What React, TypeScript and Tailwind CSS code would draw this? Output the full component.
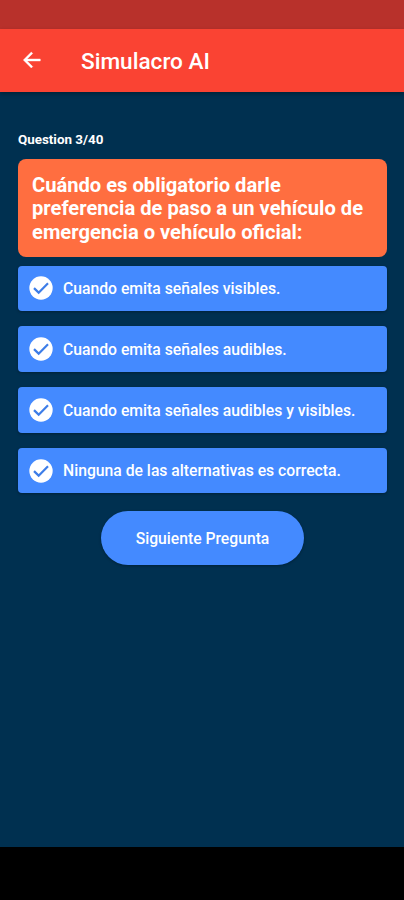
const answers = [
  'Cuando emita señales visibles.',
  'Cuando emita señales audibles.',
  'Cuando emita señales audibles y visibles.',
  'Ninguna de las alternativas es correcta.',
];

function Answer({ text }: { text: string }) {
  return (
    <button className="flex h-[45.4px] w-full items-center rounded-[4px] bg-[#448aff] pl-[9px] text-left text-white shadow-[0_1px_3px_rgba(0,0,0,0.3)]">
      <svg className="size-7 shrink-0" viewBox="0 0 24 24">
        <circle cx="12" cy="12" r="10" fill="currentColor" />
        <path d="M6 12.1 10 16 18 7.9" fill="none" stroke="#3d7de8" strokeWidth="1.9" />
      </svg>
      <span className="ml-2 pt-px text-[15.73px] font-medium whitespace-nowrap">{text}</span>
    </button>
  );
}

export default function App() {
  return (
    <div className="flex h-[900px] w-[404px] flex-col overflow-hidden bg-[#003050] font-['Roboto',sans-serif] text-white">
      <div className="h-[28.5px] shrink-0 bg-[#b8312b]" />
      <header className="flex h-[63px] shrink-0 items-center bg-[#fa4333] pl-5 shadow-[0_2px_4px_rgba(0,0,0,0.3)]">
        <svg className="size-6" viewBox="0 0 24 24" fill="currentColor" stroke="currentColor" strokeWidth="0.4">
          <path d="M21 11H7.83l5.59-5.59L12 4l-8 8 8 8 1.41-1.41L7.83 13H21v-2z" transform="translate(-.7 0)" />
        </svg>
        <h1 className="ml-[37px] pt-[3px] text-[22.6px] font-medium">Simulacro AI</h1>
      </header>
      <main className="flex grow flex-col pt-[39.5px] pr-[17px] pl-[18px]">
        <p className="text-[13.4px] leading-[18px] font-bold">Question 3/40</p>
        <section className="mt-[10px] h-[98px] shrink-0 rounded-[8px] bg-[#ff6e40] px-[14px] pt-[14.6px] text-[20.15px] leading-[23.5px] font-bold whitespace-nowrap">
          Cuándo es obligatorio darle
          <br />
          preferencia de paso a un vehículo de
          <br />
          emergencia o vehículo oficial:
        </section>
        <div className="mt-[8.7px] flex flex-col gap-[15.4px]">
          {answers.map((text) => (
            <Answer key={text} text={text} />
          ))}
        </div>
        <button className="mt-[17.5px] h-[54px] w-[203px] self-center rounded-full bg-[#448aff] pt-px text-[15.7px] font-medium shadow-[0_1px_3px_rgba(0,0,0,0.3)]">
          Siguiente Pregunta
        </button>
      </main>
      <div className="h-[53px] shrink-0 bg-black" />
    </div>
  );
}
